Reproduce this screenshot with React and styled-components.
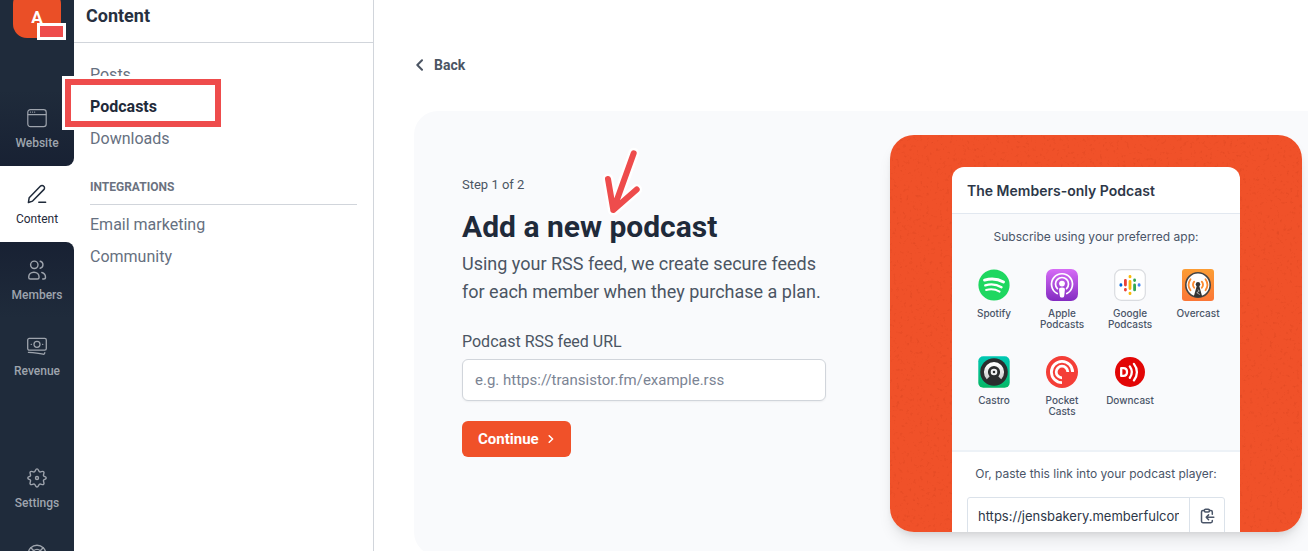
import React from "react";
import styled, { createGlobalStyle, css } from "styled-components";

const sans = `"Roboto", "Liberation Sans", sans-serif`;
const inter = `"Inter", "Liberation Sans", sans-serif`;

const Global = createGlobalStyle`
  *, *::before, *::after { box-sizing: border-box; }
  html, body { margin: 0; height: 100%; overflow: hidden; background: #fff; }
  body { font-family: ${sans}; color: #1f2a3a; }
  h1, h2, h3, p, ul { margin: 0; padding: 0; }
  ul { list-style: none; }
  a { color: inherit; text-decoration: none; }
`;

const Shell = styled.div`
  display: flex;
  height: 100vh;
  overflow: hidden;
`;

/* Primary navigation rail */
const Rail = styled.nav`
  flex: none;
  width: 74px;
  display: flex;
  flex-direction: column;
  background: #fff;
`;
const RailGroup = styled.div`
  display: flex;
  flex-direction: column;
  align-items: stretch;
  ${(p) =>
    p.$end
      ? css`
          flex: 1 0 auto;
          border-top-right-radius: 8px;
          background: linear-gradient(#182133, #1f2b3b 76px);
        `
      : css`
          flex: none;
          border-bottom-right-radius: 8px;
          background: linear-gradient(#1f2b3b 90px, #182133);
        `}
`;
const Brand = styled.a`
  position: relative;
  align-self: center;
  display: flex;
  align-items: center;
  justify-content: center;
  width: 48px;
  height: 48px;
  margin: -10px 0 52px;
  padding-top: 6px;
  border-radius: 14px;
  background: #ea4f27;
  color: #fff;
  font-size: 17px;
  font-weight: 700;
`;
const BrandMark = styled.span`
  position: absolute;
  right: -5px;
  bottom: -2px;
  width: 29px;
  height: 17px;
  border: 3px solid #fff;
  background: #ee4c4c;
`;
const RailLink = styled.a`
  flex: none;
  display: flex;
  flex-direction: column;
  align-items: center;
  gap: 6px;
  height: 76px;
  padding-top: 18px;
  font-size: 12px;
  line-height: 18px;
  font-weight: ${(p) => (p.$active ? 400 : 500)};
  color: ${(p) => (p.$active ? "#1f2a3a" : "#9ea4ad")};
  svg { display: block; flex: none; }
`;
const RailGap = styled.div`
  height: 56px;
`;

/* Section navigation */
const Side = styled.aside`
  flex: none;
  width: 300px;
  border-right: 1px solid #d1d5db;
`;
const SideHead = styled.header`
  height: 43px;
  padding: 4px 12px;
  border-bottom: 1px solid #d1d5db;
`;
const SideTitle = styled.h2`
  font-size: 18px;
  line-height: 24px;
  font-weight: 700;
  color: #27303f;
`;
const SideBody = styled.div`
  position: relative;
  padding: 16px;
`;
const SideLink = styled.a`
  display: block;
  font-size: 16px;
  line-height: 32px;
  color: ${(p) => (p.$active ? "#1f2a3a" : "#667080")};
  font-weight: ${(p) => (p.$active ? 700 : 400)};
`;
const SideLabel = styled.h3`
  margin: 20px 0 4px;
  padding-bottom: 5px;
  border-bottom: 1px solid #d1d5db;
  font-size: 12px;
  line-height: 24px;
  font-weight: 700;
  color: #6b7280;
`;
const Highlight = styled.span`
  position: absolute;
  left: -9px;
  top: 36px;
  width: 156px;
  height: 48px;
  border: 6px solid #ee4c4c;
  box-shadow: 0 0 0 3px #fff, inset 0 0 0 3px #fff;
  pointer-events: none;
`;

/* Main area */
const Main = styled.main`
  flex: 1;
  min-width: 0;
  padding: 53px 0 0 40px;
`;
const Back = styled.a`
  display: inline-flex;
  align-items: center;
  gap: 8px;
  height: 24px;
  margin-bottom: 34px;
  font-size: 14px;
  line-height: 24px;
  font-weight: 700;
  color: #4b5563;
`;
const Panel = styled.section`
  display: flex;
  gap: 64px;
  padding: 24px 6px 24px 48px;
  border-radius: 24px 0 0 24px;
  background: #f9fafc;
`;
const Form = styled.form`
  position: relative;
  flex: 1;
  min-width: 0;
  padding-top: 40px;
`;
const Step = styled.p`
  font-size: 13px;
  line-height: 20px;
  color: #4b5563;
`;
const Title = styled.h1`
  margin: 14px 0 5px;
  font-size: 30px;
  line-height: 36px;
  font-weight: 700;
  color: #1f2a3a;
`;
const Lead = styled.p`
  font-size: 18px;
  line-height: 28px;
  color: #4b5563;
`;
const Label = styled.label`
  display: block;
  margin: 24px 0 5px;
  font-size: 16px;
  line-height: 24px;
  color: #4b5563;
`;
const Field = styled.input`
  display: block;
  width: 100%;
  height: 42px;
  padding: 0 12px;
  border: 1px solid #d1d5db;
  border-radius: 6px;
  background: #fff;
  box-shadow: 0 1px 2px rgba(0, 0, 0, 0.05);
  font: 15px ${sans};
  color: #1f2a3a;
  &::placeholder { color: #7b8494; opacity: 1; }
`;
const Submit = styled.button`
  display: inline-flex;
  align-items: center;
  gap: 8px;
  height: 36px;
  margin-top: 20px;
  padding: 0 16px;
  border: 0;
  border-radius: 6px;
  background: #f05129;
  color: #fff;
  font: 700 15px ${sans};
`;
const Arrow = styled.svg`
  position: absolute;
  left: 138px;
  top: 10px;
  pointer-events: none;
`;

/* Illustration */
const Art = styled.div`
  position: relative;
  display: flex;
  justify-content: center;
  width: 412px;
  height: 397px;
  padding-top: 32px;
  border-radius: 24px;
  overflow: hidden;
  background: #f05129;
`;
const ArtShadow = styled.div`
  flex: none;
  align-self: flex-start;
  border-radius: 24px;
  box-shadow: 0 10px 15px -3px rgba(0, 0, 0, 0.1), 0 4px 6px -2px rgba(0, 0, 0, 0.08);
`;
const Grain = styled.svg`
  position: absolute;
  inset: 0;
  width: 100%;
  height: 100%;
`;
const Phone = styled.div`
  position: relative;
  width: 288px;
  height: 420px;
  border-radius: 12px 12px 0 0;
  background: #fff;
  font-family: ${inter};
  color: #4a5568;
`;
const PhoneHead = styled.h2`
  padding: 12px 15px 10px;
  font-size: 14px;
  line-height: 24px;
  font-weight: 600;
  color: #2d3748;
`;
const Apps = styled.div`
  padding: 15px 8px 0;
  height: 239px;
  border-top: 1px solid #e2e8f0;
  border-bottom: 2px solid #edf2f7;
  background: #f9fafc;
`;
const Hint = styled.p`
  display: block;
  font-size: 12px;
  line-height: 16px;
  text-align: center;
`;
const AppGrid = styled.ul`
  display: grid;
  grid-template-columns: repeat(4, 1fr);
  grid-auto-rows: 87px;
  margin-top: 24px;
`;
const AppItem = styled.li`
  display: flex;
  flex-direction: column;
  align-items: center;
  gap: 7px;
  font-size: 10px;
  line-height: 11px;
  font-weight: 500;
  text-align: center;
  white-space: pre-line;
  svg { display: block; flex: none; }
`;
const Paste = styled.div`
  padding: 14px 15px;
`;
const CopyRow = styled.div`
  display: flex;
  height: 38px;
  margin-top: 15px;
  border: 1px solid #dbe2ea;
  border-radius: 3px;
`;
const CopyField = styled.input`
  flex: 1;
  min-width: 0;
  padding: 0;
  margin: 0 10px;
  border: 0;
  background: none;
  font: 13px ${inter};
  color: #2d3748;
`;
const CopyButton = styled.button`
  display: flex;
  align-items: center;
  justify-content: center;
  width: 35px;
  padding: 0;
  border: 0;
  border-left: 1px solid #dbe2ea;
  background: none;
  color: #4a5568;
`;

const Line = ({ children, size = 20, w = 1.4 }) => (
  <svg width={size} height={size} viewBox={`0 0 ${size} ${size}`} fill="none" stroke="currentColor" strokeWidth={w} strokeLinecap="round" strokeLinejoin="round" aria-hidden="true">
    {children}
  </svg>
);

const WebsiteIcon = () => (
  <Line w={1.2}>
    <rect x="0.8" y="1.6" width="18.4" height="17" rx="2.6" />
    <path d="M1 6.6h18" />
    <path d="M3.4 4.1h.1M5.5 4.1h.1M7.6 4.1h.1" />
  </Line>
);
const PencilIcon = () => (
  <Line w={1.5}>
    <path d="M13.3 2.2a2.4 2.4 0 0 1 3.5 0 2.4 2.4 0 0 1 0 3.4L5.6 17.1l-4.2 1.4.8-4.8z" />
    <path d="M11.8 18.2h6.8" />
  </Line>
);
const MembersIcon = () => (
  <Line>
    <circle cx="7.3" cy="4.8" r="3.7" />
    <path d="M13.2 1.3a3.6 3.6 0 0 1 0 7" />
    <path d="M1.7 17.2c0-3 2.2-5 5.2-5s5.2 2 5.2 5c0 1.2-.5 1.8-1.6 1.8H3.3c-1.1 0-1.6-.6-1.6-1.8z" />
    <path d="M14.8 12.5c2.3.6 3.7 2.4 3.7 4.7 0 1.2-.6 1.8-1.8 1.8h-1" />
  </Line>
);
const RevenueIcon = () => (
  <Line w={1.3}>
    <rect x="0.7" y="2.4" width="18.6" height="11.8" rx="1.6" />
    <circle cx="10" cy="8.3" r="3" />
    <path d="M4.2 8.3h.2M15.6 8.3h.2" />
    <path d="M1.4 16.4c5 .2 10.2.6 14.6 1.8 1 .2 1.8-.3 1.8-1.6" />
  </Line>
);
const GearIcon = () => (
  <Line>
    <path d="M10 .9c1.6 0 1.5 2.5 2.7 3 1.2.5 2.9-1.3 4-.2s-.7 2.8-.2 4 2.7.8 2.7 2.3-2.2 1.1-2.7 2.3 1.3 2.9.2 4-2.8-.7-4-.2-1.1 2.9-2.7 2.9-1.5-2.4-2.7-2.900-2.900 1.300-4 .2.700-2.800.2-4-2.700-.8-2.700-2.300 2.200-1.100 2.700-2.300-1.300-2.900-.2-4 2.800.7 4 .2S8.400.9 10 .9z" />
    <circle cx="10" cy="10" r="1.5" />
  </Line>
);
const HelpIcon = () => (
  <Line>
    <circle cx="10" cy="10" r="8.8" />
    <circle cx="10" cy="10" r="4.6" />
    <path d="M3.8 3.8l3 3M16.2 3.8l-3 3M6.8 13.2l-3 3M13.2 13.2l3 3" />
  </Line>
);

const Spotify = () => (
  <svg width="32" height="32" viewBox="0 0 32 32" aria-hidden="true">
    <circle cx="16" cy="16" r="15.6" fill="#1ed760" />
    <g fill="none" stroke="#fff" strokeLinecap="round">
      <path d="M6.5 11.1c6.5-1.9 13.6-1.2 19 2" strokeWidth="2.9" />
      <path d="M7.3 16.3c5.5-1.6 11.5-.9 16.2 1.9" strokeWidth="2.4" />
      <path d="M8.1 21c4.8-1.3 9.5-.7 13.5 1.6" strokeWidth="2" />
    </g>
  </svg>
);
const Apple = () => (
  <svg width="32" height="32" viewBox="0 0 32 32" aria-hidden="true">
    <defs>
      <linearGradient id="appleBg" x1="0" y1="0" x2="0" y2="1">
        <stop offset="0" stopColor="#d66cf6" />
        <stop offset="1" stopColor="#832bc1" />
      </linearGradient>
    </defs>
    <rect width="32" height="32" rx="7" fill="url(#appleBg)" />
    <g fill="none" stroke="#fff" strokeWidth="1.7" strokeLinecap="round">
      <path d="M11.2 24.6a10.5 10.5 0 1 1 9.6 0" />
      <path d="M11.4 19.6a6.5 6.5 0 1 1 9.2 0" />
    </g>
    <circle cx="16" cy="14.6" r="2.9" fill="#fff" />
    <path d="M16 18.6c2.3 0 3.1.8 2.9 2.5l-.7 5.6c-.2 1.5-.9 1.9-2.2 1.9s-2-.4-2.2-1.9l-.7-5.6c-.2-1.7.6-2.5 2.9-2.5z" fill="#fff" />
  </svg>
);
const Google = () => (
  <svg width="32" height="32" viewBox="0 0 32 32" aria-hidden="true">
    <rect x=".7" y=".7" width="30.6" height="30.6" rx="6.5" fill="#fff" stroke="#dadce0" strokeWidth="1.2" />
    <g fill="none" strokeWidth="2.8" strokeLinecap="round">
      <path d="M6.9 15.7v.6" stroke="#0066d9" />
      <path d="M11.4 11.3v4.8M11.4 20.5v.6" stroke="#ea4335" />
      <path d="M16 7.3v.6M16 12.3v7.3M16 24.1v.6" stroke="#fab908" />
      <path d="M20.6 11v.6M20.6 16v4.9" stroke="#34a853" />
      <path d="M25.1 15.7v.6" stroke="#4285f4" />
    </g>
  </svg>
);
const Overcast = () => (
  <svg width="32" height="32" viewBox="0 0 32 32" aria-hidden="true">
    <defs>
      <linearGradient id="ocBg" x1="0" y1="0" x2="0" y2="1">
        <stop offset="0" stopColor="#fc9d34" />
        <stop offset="1" stopColor="#fb7636" />
      </linearGradient>
    </defs>
    <rect width="32" height="32" rx="3" fill="url(#ocBg)" />
    <circle cx="16" cy="16" r="12.2" fill="#fff" stroke="#444" strokeWidth="1.6" />
    <g fill="none" stroke="#fc8a30" strokeWidth="1.8" strokeLinecap="round">
      <path d="M12.2 12.6a5 5 0 0 0 0 6.2M19.8 12.6a5 5 0 0 1 0 6.2M8.5 10.2a9.6 9.6 0 0 0 0 11M23.5 10.2a9.6 9.6 0 0 1 0 11" />
    </g>
    <circle cx="16" cy="15.2" r="2.2" fill="#333" />
    <path d="M15 16h2l3.2 11.4a12 12 0 0 1-8.4 0z" fill="#333" />
    <path d="M16 20.5l1.2 1.7-2.4 1.5 3 1.8" stroke="#ddd" strokeWidth=".7" fill="none" />
  </svg>
);
const Castro = () => (
  <svg width="32" height="32" viewBox="0 0 32 32" aria-hidden="true">
    <defs>
      <linearGradient id="caBg" x1="0" y1="0" x2="0" y2="1">
        <stop offset="0" stopColor="#00c8b4" />
        <stop offset="1" stopColor="#06b765" />
      </linearGradient>
      <linearGradient id="caFg" x1="0" y1="0" x2="0" y2="1">
        <stop offset="0" stopColor="#fff" />
        <stop offset="1" stopColor="#d0d0d0" />
      </linearGradient>
    </defs>
    <rect x=".3" y=".3" width="31.4" height="31.4" rx="5" fill="url(#caBg)" />
    <circle cx="16" cy="16" r="13.8" fill="#2b2d2e" />
    <path d="M10.2 21.8a8.100 8.100 0 1 1 11.600 0" fill="none" stroke="url(#caFg)" strokeWidth="4" />
    <circle cx="16" cy="16" r="2.3" fill="#2b2d2e" stroke="#efefef" strokeWidth="2" />
  </svg>
);
const PocketCasts = () => (
  <svg width="32" height="32" viewBox="0 0 32 32" aria-hidden="true">
    <circle cx="16" cy="16" r="16" fill="#f43e37" />
    <g fill="none" stroke="#fff" strokeWidth="2.8">
      <path d="M16 26.6A10.6 10.6 0 1 1 26.6 16" />
      <path d="M16 21.8A5.8 5.8 0 1 1 21.8 16" />
    </g>
  </svg>
);
const Downcast = () => (
  <svg width="32" height="32" viewBox="0 0 32 32" aria-hidden="true">
    <circle cx="16" cy="16" r="15" fill="#e20606" />
    <g fill="none" stroke="#fff" strokeWidth="2.3">
      <path d="M7.2 12.1h2.2c2.2 0 3.6 1.5 3.6 3.9s-1.4 3.9-3.6 3.9H7.2z" strokeLinejoin="round" />
      <path d="M15.8 10.4c2.5 3.6 2.5 8 0 11.4" strokeLinecap="round" />
      <path d="M19.9 7.9c4 5 4 11.6 0 16.5" strokeLinecap="round" />
    </g>
  </svg>
);

const apps = [
  ["Spotify", Spotify],
  ["Apple\nPodcasts", Apple],
  ["Google\nPodcasts", Google],
  ["Overcast", Overcast],
  ["Castro", Castro],
  ["Pocket\nCasts", PocketCasts],
  ["Downcast", Downcast],
];

export default function App() {
  return (
    <>
      <Global />
      <Shell>
        <Rail aria-label="Primary">
          <RailGroup>
            <Brand href="#home">
              A
              <BrandMark />
            </Brand>
            <RailLink href="#website"><WebsiteIcon />Website</RailLink>
          </RailGroup>
          <RailLink href="#content" $active aria-current="page"><PencilIcon />Content</RailLink>
          <RailGroup $end>
            <RailLink href="#members"><MembersIcon />Members</RailLink>
            <RailLink href="#revenue"><RevenueIcon />Revenue</RailLink>
            <RailGap />
            <RailLink href="#settings"><GearIcon />Settings</RailLink>
            <RailLink href="#help" aria-label="Help"><HelpIcon /></RailLink>
          </RailGroup>
        </Rail>

        <Side>
          <SideHead><SideTitle>Content</SideTitle></SideHead>
          <SideBody>
            <SideLink href="#posts">Posts</SideLink>
            <SideLink href="#podcasts" $active>Podcasts</SideLink>
            <SideLink href="#downloads">Downloads</SideLink>
            <SideLabel>INTEGRATIONS</SideLabel>
            <SideLink href="#email">Email marketing</SideLink>
            <SideLink href="#community">Community</SideLink>
            <Highlight />
          </SideBody>
        </Side>

        <Main>
          <Back href="#back">
            <Line size={12} w={2}><path d="M8 1.3L3.3 6 8 10.7" /></Line>
            Back
          </Back>
          <Panel>
            <Form onSubmit={(e) => e.preventDefault()}>
              <Step>Step 1 of 2</Step>
              <Title>Add a new podcast</Title>
              <Lead>Using your RSS feed, we create secure feeds for each member when they purchase a plan.</Lead>
              <Label htmlFor="rss">Podcast RSS feed URL</Label>
              <Field id="rss" type="url" placeholder="e.g. https://transistor.fm/example.rss" />
              <Submit type="submit">
                Continue
                <Line size={8} w={1.5}><path d="M2.2 .8L5.6 4 2.2 7.2" /></Line>
              </Submit>
              <Arrow width="46" height="72" viewBox="0 0 46 72" fill="none" strokeLinecap="round" strokeLinejoin="round" aria-hidden="true">
                <path d="M33.7 8.3L13.3 65M8 34l5.3 31 23.4-20.6" stroke="#fff" strokeWidth="11" />
                <path d="M33.7 8.3L13.3 65M8 34l5.3 31 23.4-20.6" stroke="#ee4c4c" strokeWidth="6" />
              </Arrow>
            </Form>
            <ArtShadow>
              <Art>
                <Grain aria-hidden="true">
                  <filter id="grain" x="0" y="0" width="100%" height="100%" colorInterpolationFilters="sRGB">
                    <feTurbulence type="fractalNoise" baseFrequency="0.3" numOctaves="3" seed="4" />
                    <feColorMatrix values="0 0 0 0 0.6  0 0 0 0 0.15  0 0 0 0 0.05  4 0 0 0 -2.4" />
                  </filter>
                  <rect width="100%" height="100%" filter="url(#grain)" opacity="0.12" />
                </Grain>
                <Phone>
                  <PhoneHead>The Members-only Podcast</PhoneHead>
                  <Apps>
                    <Hint>Subscribe using your preferred app:</Hint>
                    <AppGrid>
                      {apps.map(([name, Icon]) => (
                        <AppItem key={name}><Icon />{name}</AppItem>
                      ))}
                    </AppGrid>
                  </Apps>
                  <Paste>
                    <Hint as="label" htmlFor="feed">Or, paste this link into your podcast player:</Hint>
                    <CopyRow>
                      <CopyField id="feed" readOnly value="https://jensbakery.memberfulcontent.com" />
                      <CopyButton type="button" aria-label="Copy link">
                        <Line size={16} w={1.5}>
                          <path d="M5.3 2.6H3.9c-.8 0-1.4.6-1.4 1.4v9.3c0 .8.6 1.4 1.4 1.4h8c.8 0 1.4-.6 1.4-1.4v-.9M10.5 2.6h1.4c.8 0 1.4.6 1.4 1.4v2.2" />
                          <rect x="5.3" y="1.2" width="5.2" height="2.8" rx="1.2" />
                          <path d="M14.8 9.3H7.2M9.6 6.9L7.2 9.3l2.4 2.4" />
                        </Line>
                      </CopyButton>
                    </CopyRow>
                  </Paste>
                </Phone>
              </Art>
            </ArtShadow>
          </Panel>
        </Main>
      </Shell>
    </>
  );
}
